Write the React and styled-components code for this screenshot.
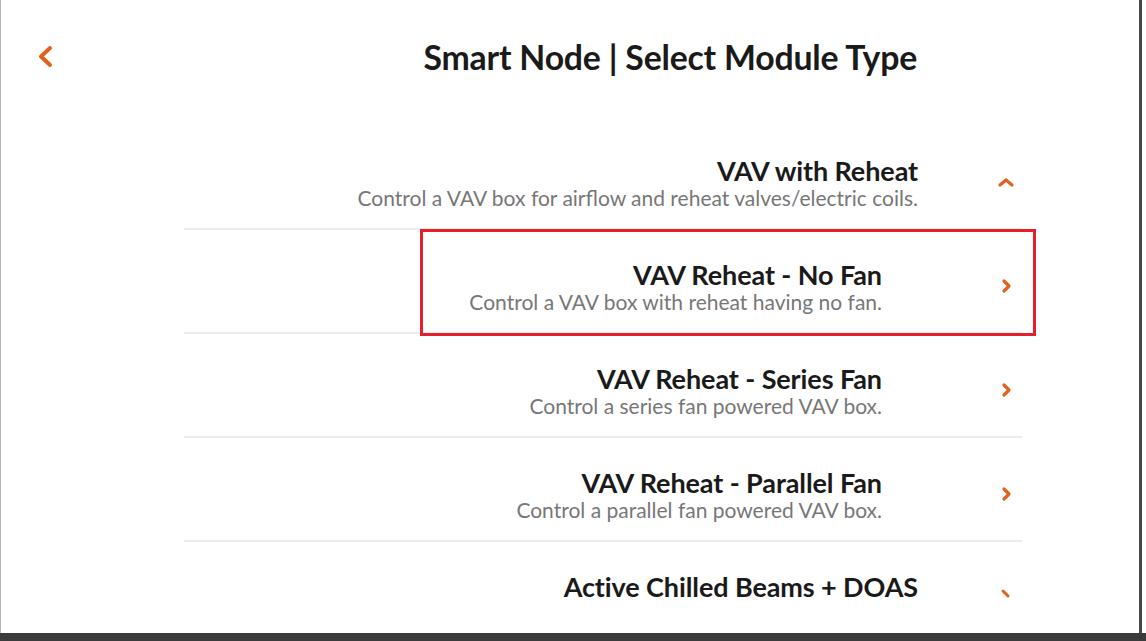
import React from 'react'
import styled, { createGlobalStyle } from 'styled-components'

const GlobalStyle = createGlobalStyle`
  html, body {
    margin: 0;
    padding: 0;
    background: #ffffff;
  }
  body {
    font-family: Lato, "Open Sans", sans-serif;
  }
`

const Frame = styled.div`
  width: 1146px;
  height: 641px;
  box-sizing: border-box;
  border-bottom: 8px solid #3b3b3b;
  overflow: hidden;
`

const Screen = styled.div`
  width: 1142px;
  height: 100%;
  box-sizing: border-box;
  border-left: 1px solid #bdb6b0;
  border-right: 3px solid #474747;
  display: flex;
  flex-direction: column;
  overflow: hidden;
`

const Header = styled.div`
  flex-shrink: 0;
  display: flex;
  align-items: center;
  height: 118px;
  padding: 0 0 0 35px;
  box-sizing: border-box;
  margin-top: -2px;
`

const BackButton = styled.button`
  border: none;
  background: none;
  padding: 0;
  width: 20px;
  height: 28px;
  display: flex;
  align-items: center;
  justify-content: center;
  cursor: pointer;
  align-self: flex-start;
  margin-top: 45px;
`

const Title = styled.h1`
  margin: 0 0 0 auto;
  width: 900px;
  padding-right: 222px;
  box-sizing: border-box;
  text-align: right;
  font-size: 33.8px;
  font-weight: 700;
  color: #1a1a1a;
  letter-spacing: -0.2px;
`

const List = styled.div`
  flex-shrink: 0;
  margin-left: 183px;
  width: 838px;
  margin-top: 10px;
`

const Row = styled.div`
  position: relative;
  display: flex;
  align-items: flex-start;
  height: 104px;
  box-sizing: border-box;
  padding-top: 30px;
  border-bottom: ${({ $last }) => ($last ? 'none' : '2px solid #ececec')};
`

const Text = styled.div`
  flex: 1;
  text-align: right;
  padding-right: ${({ $sub }) => ($sub ? '140px' : '104px')};
  white-space: nowrap;
`

const ItemTitle = styled.div`
  font-size: 27px;
  line-height: 29px;
  font-weight: 700;
  color: #1a1a1a;
  letter-spacing: -0.1px;
`

const ItemDesc = styled.div`
  font-size: 21px;
  line-height: 26px;
  color: #777777;
`

const Chevron = styled.div`
  position: absolute;
  right: 6px;
  top: ${({ $top }) => $top}px;
  width: 20px;
  height: 16px;
  display: flex;
  align-items: center;
  justify-content: center;
`

const Highlight = styled.div`
  position: absolute;
  left: 236px;
  right: -14px;
  top: -1px;
  bottom: -4px;
  border: 3px solid #e3202b;
  pointer-events: none;
`

const ORANGE = '#e2621d'

const ChevronIcon = ({ dir }) => {
  if (dir === 'up') {
    return (
      <svg width="18" height="12" viewBox="0 0 18 12">
        <polyline points="3,9 9,4 15,9" fill="none" stroke={ORANGE} strokeWidth="3.2" strokeLinecap="round" strokeLinejoin="round" />
      </svg>
    )
  }
  if (dir === 'turning') {
    return (
      <svg width="14" height="14" viewBox="0 0 14 14">
        <line x1="4" y1="4" x2="9" y2="9" stroke={ORANGE} strokeWidth="3" strokeLinecap="round" />
      </svg>
    )
  }
  return (
    <svg width="12" height="16" viewBox="0 0 12 16">
      <polyline points="4,3 9,8 4,13" fill="none" stroke={ORANGE} strokeWidth="3.2" strokeLinecap="round" strokeLinejoin="round" />
    </svg>
  )
}

const items = [
  { title: 'VAV with Reheat', desc: 'Control a VAV box for airflow and reheat valves/electric coils.', icon: 'up', top: 48 },
  { title: 'VAV Reheat - No Fan', desc: 'Control a VAV box with reheat having no fan.', icon: 'right', sub: true, selected: true, top: 48 },
  { title: 'VAV Reheat - Series Fan', desc: 'Control a series fan powered VAV box.', icon: 'right', sub: true, top: 48 },
  { title: 'VAV Reheat - Parallel Fan', desc: 'Control a parallel fan powered VAV box.', icon: 'right', sub: true, top: 48 },
  { title: 'Active Chilled Beams + DOAS', icon: 'turning', last: true, top: 44 },
]

const App = () => {
  return (
    <>
      <GlobalStyle />
      <Frame>
        <Screen>
          <Header>
            <BackButton aria-label="Back">
              <svg width="20" height="28" viewBox="0 0 20 28">
                <polyline points="14,5 5,13.5 14,22" fill="none" stroke={ORANGE} strokeWidth="4" strokeLinecap="round" strokeLinejoin="round" />
              </svg>
            </BackButton>
            <Title>Smart Node | Select Module Type</Title>
          </Header>
          <List>
            {items.map((item) => (
              <Row key={item.title} $last={item.last}>
                <Text $sub={item.sub}>
                  <ItemTitle>{item.title}</ItemTitle>
                  {item.desc && <ItemDesc>{item.desc}</ItemDesc>}
                </Text>
                <Chevron $top={item.top}>
                  <ChevronIcon dir={item.icon} />
                </Chevron>
                {item.selected && <Highlight />}
              </Row>
            ))}
          </List>
        </Screen>
      </Frame>
    </>
  )
}

export default App
